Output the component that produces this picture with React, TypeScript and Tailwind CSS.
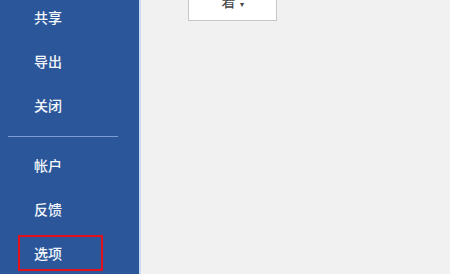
const font = { fontFamily: '"Noto Sans CJK SC", "Microsoft YaHei", sans-serif' };

const topItems = ['共享', '导出', '关闭'];
const bottomItems = ['帐户', '反馈', '选项'];

function NavItem({ label, active }: { label: string; active?: boolean }) {
  return (
    <div
      className={`ml-[18px] flex h-[36px] w-[85px] items-center pl-[14px] text-[14px] font-medium text-[#f3f6fb] ${
        active ? 'border-2 border-[#e2101a]' : 'border-2 border-transparent'
      }`}
    >
      {label}
    </div>
  );
}

export default function App() {
  return (
    <div className="flex h-[274px] w-[450px] overflow-hidden bg-[#f1f1f1]" style={font}>
      <aside className="flex h-full w-[139px] shrink-0 flex-col bg-[#2b579a]">
        <div className="-mt-[1px] flex flex-col gap-[8px]">
          {topItems.map((t) => (
            <NavItem key={t} label={t} />
          ))}
        </div>
        <div className="ml-[8px] mt-[13px] h-[1px] w-[110px] bg-[#7b9fd3]" />
        <div className="mt-[10px] flex flex-col gap-[8px]">
          {bottomItems.map((t) => (
            <NavItem key={t} label={t} active={t === '选项'} />
          ))}
        </div>
      </aside>
      <div className="h-full w-[2px] shrink-0 bg-[#c9dcf3]" />
      <main className="flex-1">
        <div className="ml-[47px] -mt-[14px] flex h-[35px] w-[89px] items-end justify-center gap-[4px] border border-[#c6c6c6] bg-white pb-[12px] text-[14px] leading-none text-[#444]">
          <span>着</span>
          <span className="text-[8px]">▾</span>
        </div>
      </main>
    </div>
  );
}
